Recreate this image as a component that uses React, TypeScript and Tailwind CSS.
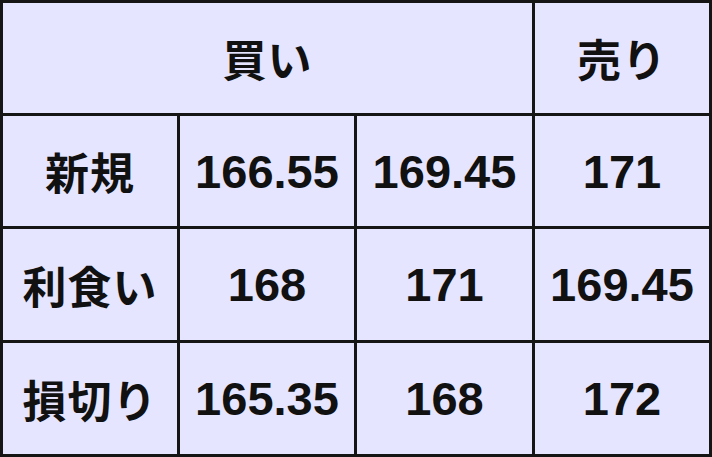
import React from 'react';

const jp = "font-['Noto_Sans_CJK_JP',sans-serif] font-bold text-[44px] tracking-[1px]";
const num = "font-['Liberation_Sans',Arial,sans-serif] font-bold text-[47px]";

const rows: { label: string; values: string[] }[] = [
  { label: '新規', values: ['166.55', '169.45', '171'] },
  { label: '利食い', values: ['168', '171', '169.45'] },
  { label: '損切り', values: ['165.35', '168', '172'] },
];

const Cell: React.FC<{ className?: string; children: React.ReactNode }> = ({ className = '', children }) => (
  <div className={`flex items-center justify-center bg-[#e5e5ff] text-[#111] leading-none ${className}`}>
    {children}
  </div>
);

export default function App() {
  return (
    <div className="w-[712px] h-[457px] bg-[#151515] p-[3px] grid grid-cols-[174px_174px_175px_174px] grid-rows-[110px_110px_111px_111px] gap-[3px]">
      <Cell className={`col-span-3 ${jp}`}>買い</Cell>
      <Cell className={jp}>売り</Cell>
      {rows.map((row) => (
        <React.Fragment key={row.label}>
          <Cell className={jp}>{row.label}</Cell>
          {row.values.map((v, i) => (
            <Cell key={i} className={num}>
              {v}
            </Cell>
          ))}
        </React.Fragment>
      ))}
    </div>
  );
}
